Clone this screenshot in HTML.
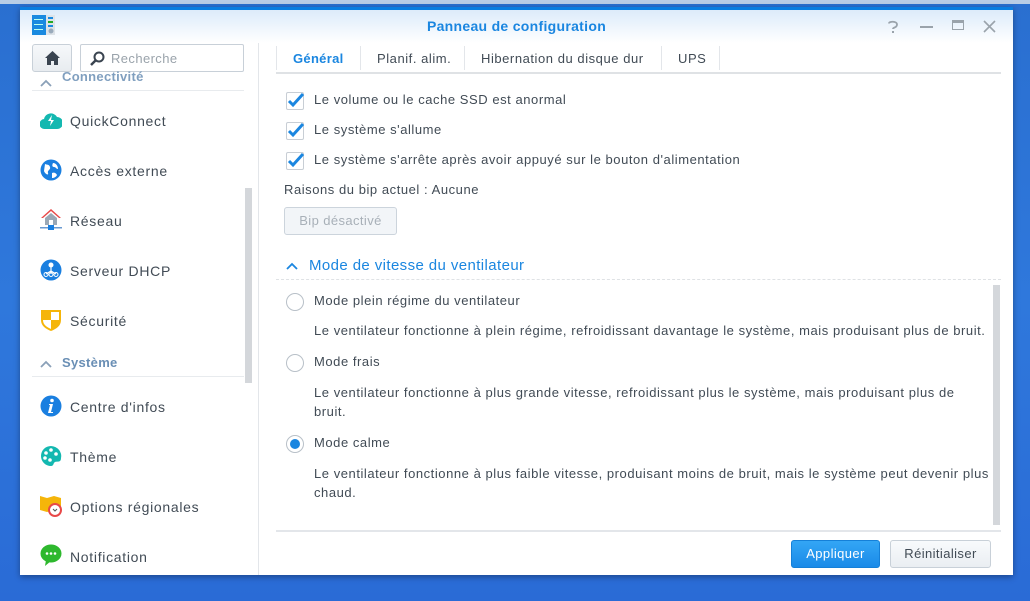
<!DOCTYPE html>
<html><head><meta charset="utf-8"><style>
*{box-sizing:border-box;margin:0;padding:0}
body{width:1030px;height:601px;overflow:hidden;background:linear-gradient(180deg,#2a6fd0 0%,#2f78dc 50%,#2a6bd6 100%);font-family:"Liberation Sans",sans-serif;font-size:13px;color:#414b55;position:relative;letter-spacing:.55px}
.topstrip{position:absolute;left:0;top:0;width:1030px;height:4px;background:#b9cde6}
.win{position:absolute;left:20px;top:7px;width:993px;height:568px;background:#fff;border-top:3px solid #0a7ee0;box-shadow:0 2px 6px rgba(0,0,0,.35)}
.title{position:absolute;left:0;top:0;width:993px;height:33px;background:linear-gradient(#dcebfa,#fff)}
.title .t{position:absolute;left:0;width:993px;top:8px;text-align:center;color:#1a86e0;font-weight:bold;font-size:14px;letter-spacing:.3px}
.side{position:absolute;left:0;top:33px;width:239px;height:532px;border-right:1px solid #e3e6ea;overflow:hidden}
.abs{position:absolute}
.item{position:absolute;left:50px;font-size:14px;color:#414b55;letter-spacing:.7px}
.hdr{position:absolute;left:42px;font-weight:bold;color:#6a8fb5;font-size:13px;letter-spacing:.3px}
.lbl{position:absolute;font-size:13px;white-space:nowrap}
.cb{position:absolute;left:266px;width:18px;height:18px;border:1px solid #c8ced5;border-radius:2px;background:#fff}
.cb svg{position:absolute;left:-1px;top:-2px}
.rad{position:absolute;left:266px;width:18px;height:18px;border:1px solid #b8c0c8;border-radius:50%;background:#fff}
.btn{position:absolute;height:28px;border-radius:3px;font-size:13px;text-align:center;line-height:26px;letter-spacing:.4px}
</style></head><body>
<div class="topstrip"></div>
<div class="win">
 <div class="title">
  <svg class="abs" style="left:12px;top:5px" width="24" height="22"><rect x="0" y="0" width="14" height="20" fill="#1a8ae0"/><rect x="2" y="4" width="9" height="1" fill="#bfe"/><rect x="2" y="9" width="9" height="1" fill="#bfe"/><rect x="2" y="14" width="9" height="1" fill="#bfe"/><rect x="14" y="0" width="9" height="20" fill="#dde3e8"/><rect x="16" y="2" width="5" height="2" fill="#1a8ae0"/><rect x="16" y="6" width="5" height="2" fill="#2a2"/><rect x="16" y="10" width="5" height="2" fill="#1a8ae0"/><circle cx="19" cy="16" r="2.5" fill="#9ab"/></svg>
  <div class="t">Panneau de configuration</div>
  <svg class="abs" style="left:867px;top:10px" width="12" height="14"><path d="M2 3.5C2 1 10 1 10 4.5S6 7 6 9" stroke="#9aa3ab" stroke-width="1.8" fill="none"/><rect x="5" y="11" width="2" height="2" fill="#9aa3ab"/></svg>
  <div class="abs" style="left:900px;top:16px;width:13px;height:2px;background:#9aa3ab"></div>
  <div class="abs" style="left:932px;top:10px;width:12px;height:10px;border:1.5px solid #9aa3ab;border-top-width:3px"></div>
  <svg class="abs" style="left:963px;top:10px" width="13" height="13"><path d="M1 1L12 12M12 1L1 12" stroke="#9aa3ab" stroke-width="1.6"/></svg>
 </div>
 <div class="side">
  <div class="abs" style="left:12px;top:1px;width:40px;height:28px;border:1px solid #c8d0d8;border-radius:3px;background:linear-gradient(#f6f8fa,#e8ecf0)"><svg style="position:absolute;left:11px;top:5px" width="17" height="16"><path d="M8.5 1L1 8h2v7h4v-4h3v4h4V8h2z" fill="#3a4450"/></svg></div>
  <div class="abs" style="left:60px;top:1px;width:164px;height:28px;border:1px solid #c8d0d8;border-radius:2px;background:#fff"><svg style="position:absolute;left:9px;top:6px" width="15" height="15"><circle cx="9" cy="6" r="4.5" fill="none" stroke="#3a4450" stroke-width="2"/><path d="M6 9L1 14" stroke="#3a4450" stroke-width="2.5"/></svg><span style="position:absolute;left:30px;top:6px;color:#9aa3ab;font-size:13px;letter-spacing:.4px">Recherche</span></div>
  <svg class="abs" style="left:19px;top:35px" width="14" height="10"><path d="M2 8l5-5 5 5" stroke="#8aa0b8" stroke-width="1.8" fill="none"/></svg>
  <div class="hdr" style="top:26px;opacity:.85">Connectivité</div>
  <div class="abs" style="left:12px;top:47px;width:212px;height:1px;background:#e8ebee"></div>
  <svg class="abs" style="left:20px;top:67px" width="22" height="20"><path d="M5 19a5 5 0 0 1-1-10a7 7 0 0 1 13-2a6 6 0 0 1 0 12z" fill="#14b8b0"/><path d="M12 5l-4 6h3l-1 5 4-6h-3z" fill="#fff"/></svg>
  <div class="item" style="top:70px">QuickConnect</div>
  <svg class="abs" style="left:20px;top:116px" width="22" height="22"><circle cx="11" cy="11" r="10.5" fill="#1a7fe0"/><path d="M5 5c2 1 4 0 5 3s-3 3-2 6-3 1-4-2zM13 4c3 0 5 3 5 6-2 0-2-2-4-2s-2-2-1-4zM12 14c2-1 4 0 5 2-1 2-3 3-5 3z" fill="#fff"/></svg>
  <div class="item" style="top:120px">Accès externe</div>
  <svg class="abs" style="left:20px;top:165px" width="22" height="24"><path d="M11 1L1 10h2l8-7 8 7h2z" fill="#e84848"/><path d="M5 10l6-5 6 5v7H5z" fill="#9aa8b6"/><rect x="9" y="12" width="4" height="5" fill="#fff"/><rect x="0" y="19" width="22" height="1.5" fill="#6a9ad0"/><rect x="8" y="17" width="6" height="5" fill="#1a7fe0"/></svg>
  <div class="item" style="top:170px">Réseau</div>
  <svg class="abs" style="left:20px;top:216px" width="22" height="22"><circle cx="11" cy="11" r="10.5" fill="#1a7fe0"/><circle cx="11" cy="6" r="2.5" fill="#fff"/><path d="M11 8v4M11 12l-5 3M11 12l5 3M11 12v3" stroke="#fff" stroke-width="1.2"/><circle cx="6" cy="15.5" r="2" fill="none" stroke="#fff"/><circle cx="11" cy="15.5" r="2" fill="none" stroke="#fff"/><circle cx="16" cy="15.5" r="2" fill="none" stroke="#fff"/></svg>
  <div class="item" style="top:220px">Serveur DHCP</div>
  <svg class="abs" style="left:20px;top:265px" width="22" height="24"><path d="M1 2h20v10c0 6-5 9-10 11C6 21 1 18 1 12z" fill="#f5b50a"/><path d="M11 4h8v8h-8zM3 12h8v9c-4-2-8-4-8-9z" fill="#fff"/></svg>
  <div class="item" style="top:270px">Sécurité</div>
  <svg class="abs" style="left:19px;top:316px" width="14" height="10"><path d="M2 8l5-5 5 5" stroke="#8aa0b8" stroke-width="1.8" fill="none"/></svg>
  <div class="hdr" style="top:312px">Système</div>
  <div class="abs" style="left:12px;top:333px;width:212px;height:1px;background:#e8ebee"></div>
  <svg class="abs" style="left:20px;top:352px" width="22" height="22"><circle cx="11" cy="11" r="10.5" fill="#1a7fe0"/><circle cx="12" cy="5.5" r="1.8" fill="#fff"/><path d="M9 9h4l-2 8h2v1H8l2-8H9z" fill="#fff"/></svg>
  <div class="item" style="top:356px">Centre d'infos</div>
  <svg class="abs" style="left:20px;top:402px" width="22" height="22"><path d="M11 1a10 10 0 1 0 0 20c3 0 2-3 4-4s6 1 6-4A11 10 0 0 0 11 1z" fill="#14b8b0"/><circle cx="6" cy="8" r="1.8" fill="#fff"/><circle cx="11" cy="5" r="1.8" fill="#fff"/><circle cx="5" cy="13" r="1.8" fill="#fff"/><circle cx="10" cy="15" r="1.8" fill="#fff"/><circle cx="16" cy="9" r="1.8" fill="#fff"/></svg>
  <div class="item" style="top:406px">Thème</div>
  <svg class="abs" style="left:20px;top:450px" width="24" height="26"><path d="M0 3l7 2 7-2 7 2v14l-7-2-7 2-7-2z" fill="#f5b50a"/><circle cx="15" cy="17" r="6" fill="#fff" stroke="#e84848" stroke-width="2"/><path d="M13 16l2 2 2-2" stroke="#555" fill="none"/></svg>
  <div class="item" style="top:456px">Options régionales</div>
  <svg class="abs" style="left:20px;top:501px" width="22" height="24"><ellipse cx="11" cy="9.5" rx="10.5" ry="9" fill="#2eb82e"/><path d="M6 16l-1 6 6-5z" fill="#2eb82e"/><circle cx="7" cy="9.5" r="1.3" fill="#fff"/><circle cx="11" cy="9.5" r="1.3" fill="#fff"/><circle cx="15" cy="9.5" r="1.3" fill="#fff"/></svg>
  <div class="item" style="top:506px">Notification</div>
  <div class="abs" style="left:225px;top:145px;width:7px;height:195px;background:#d4d7db"></div>
 </div>
 <!-- tabs -->
 <div class="abs" style="left:256px;top:33px;width:725px;height:31px;border-bottom:2px solid #dfe2e5"></div>
 <div class="abs" style="left:256px;top:36px;width:1px;height:24px;background:#e3e6ea"></div>
 <div class="lbl" style="left:273px;top:41px;color:#1a86e0;font-weight:bold;letter-spacing:.3px">Général</div>
 <div class="abs" style="left:340px;top:36px;width:1px;height:24px;background:#e3e6ea"></div>
 <div class="lbl" style="left:357px;top:41px">Planif. alim.</div>
 <div class="abs" style="left:444px;top:36px;width:1px;height:24px;background:#e3e6ea"></div>
 <div class="lbl" style="left:461px;top:41px">Hibernation du disque dur</div>
 <div class="abs" style="left:641px;top:36px;width:1px;height:24px;background:#e3e6ea"></div>
 <div class="lbl" style="left:658px;top:41px">UPS</div>
 <div class="abs" style="left:699px;top:36px;width:1px;height:24px;background:#e3e6ea"></div>
 <!-- checkboxes -->
 <div class="cb" style="top:82px"><svg width="20" height="20"><path d="M3 10l4 4 10-11" stroke="#1a86e0" stroke-width="3" fill="none"/></svg></div>
 <div class="lbl" style="left:294px;top:82px">Le volume ou le cache SSD est anormal</div>
 <div class="cb" style="top:112px"><svg width="20" height="20"><path d="M3 10l4 4 10-11" stroke="#1a86e0" stroke-width="3" fill="none"/></svg></div>
 <div class="lbl" style="left:294px;top:112px">Le système s'allume</div>
 <div class="cb" style="top:142px"><svg width="20" height="20"><path d="M3 10l4 4 10-11" stroke="#1a86e0" stroke-width="3" fill="none"/></svg></div>
 <div class="lbl" style="left:294px;top:142px">Le système s'arrête après avoir appuyé sur le bouton d'alimentation</div>
 <div class="lbl" style="left:264px;top:172px">Raisons du bip actuel : Aucune</div>
 <div class="btn" style="left:264px;top:197px;width:113px;border:1px solid #ccd4dc;background:#f2f5f8;color:#a8b0b8">Bip désactivé</div>
 <svg class="abs" style="left:265px;top:251px" width="14" height="10"><path d="M2 8l5-5 5 5" stroke="#1a86e0" stroke-width="1.8" fill="none"/></svg>
 <div class="lbl" style="left:289px;top:247px;font-size:15px;color:#1a86e0;letter-spacing:.4px">Mode de vitesse du ventilateur</div>
 <div class="abs" style="left:256px;top:269px;width:725px;border-top:1px dashed #dfe2e5"></div>
 <!-- radios -->
 <div class="rad" style="top:283px"></div>
 <div class="lbl" style="left:294px;top:283px">Mode plein régime du ventilateur</div>
 <div class="lbl" style="left:294px;top:313px">Le ventilateur fonctionne à plein régime, refroidissant davantage le système, mais produisant plus de bruit.</div>
 <div class="rad" style="top:344px"></div>
 <div class="lbl" style="left:294px;top:344px">Mode frais</div>
 <div class="lbl" style="left:294px;top:373px;line-height:19px">Le ventilateur fonctionne à plus grande vitesse, refroidissant plus le système, mais produisant plus de<br>bruit.</div>
 <div class="rad" style="top:425px"><div style="position:absolute;left:3px;top:3px;width:10px;height:10px;border-radius:50%;background:#1a86e0"></div></div>
 <div class="lbl" style="left:294px;top:425px">Mode calme</div>
 <div class="lbl" style="left:294px;top:454px;line-height:19px">Le ventilateur fonctionne à plus faible vitesse, produisant moins de bruit, mais le système peut devenir plus<br>chaud.</div>
 <div class="abs" style="left:973px;top:275px;width:7px;height:240px;background:#d4d7db"></div>
 <div class="abs" style="left:256px;top:520px;width:725px;height:2px;background:#e3e6ea"></div>
 <div class="btn" style="left:771px;top:530px;width:89px;background:linear-gradient(#34a6f5,#1a8ae8);border:1px solid #1580d8;color:#fff">Appliquer</div>
 <div class="btn" style="left:870px;top:530px;width:101px;border:1px solid #c8d0d8;background:linear-gradient(#f8fafc,#eaeef2);color:#414b55">Réinitialiser</div>
</div>
</body></html>
